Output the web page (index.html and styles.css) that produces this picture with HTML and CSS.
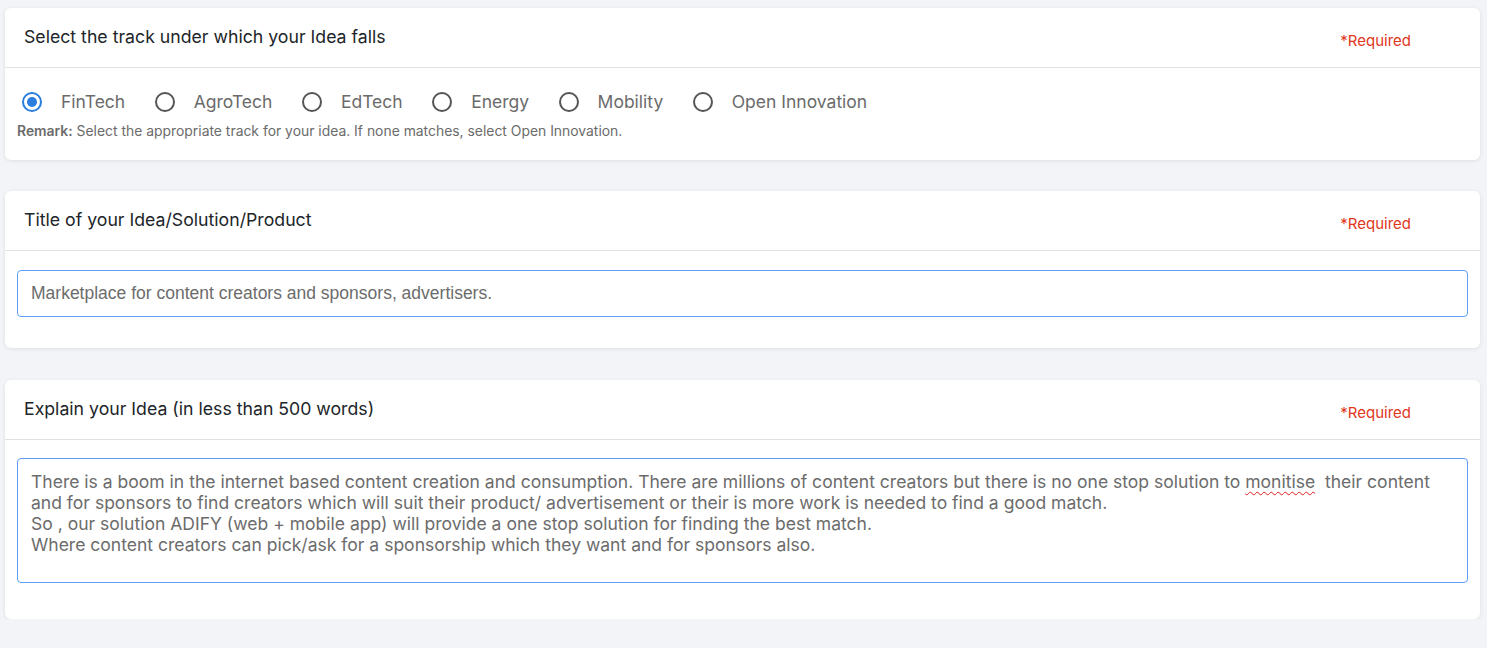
FILE: index.html
```html
<!DOCTYPE html>
<html lang="en">
<head>
<meta charset="utf-8">
<title>Idea submission</title>
<link rel="stylesheet" href="styles.css">
</head>
<body>
<main class="page">
  <section class="card">
    <header class="card-head">
      <h2 class="card-title">Select the track under which your Idea falls</h2>
      <span class="required">*Required</span>
    </header>
    <div class="card-body body-tracks">
      <div class="radios">
        <label class="radio"><span class="dot checked"></span><span class="radio-label">FinTech</span></label>
        <label class="radio"><span class="dot"></span><span class="radio-label">AgroTech</span></label>
        <label class="radio"><span class="dot"></span><span class="radio-label">EdTech</span></label>
        <label class="radio"><span class="dot"></span><span class="radio-label">Energy</span></label>
        <label class="radio"><span class="dot"></span><span class="radio-label">Mobility</span></label>
        <label class="radio"><span class="dot"></span><span class="radio-label">Open Innovation</span></label>
      </div>
      <p class="remark"><b>Remark:</b> Select the appropriate track for your idea. If none matches, select Open Innovation.</p>
    </div>
  </section>

  <section class="card">
    <header class="card-head">
      <h2 class="card-title">Title of your Idea/Solution/Product</h2>
      <span class="required">*Required</span>
    </header>
    <div class="card-body body-input">
      <div class="field field-input">Marketplace for content creators and sponsors, advertisers.</div>
    </div>
  </section>

  <section class="card card-last">
    <header class="card-head">
      <h2 class="card-title">Explain your Idea (in less than 500 words)</h2>
      <span class="required">*Required</span>
    </header>
    <div class="card-body body-area">
      <div class="field field-area">There is a boom in the internet based content creation and consumption. There are millions of content creators but there is no one stop solution to <span class="misspelt">monitise</span>  their content
and for sponsors to find creators which will suit their product/ advertisement or their is more work is needed to find a good match.
So , our solution ADIFY (web + mobile app) will provide a one stop solution for finding the best match.
Where content creators can pick/ask for a sponsorship which they want and for sponsors also.</div>
    </div>
  </section>
</main>
</body>
</html>
```

FILE: styles.css
```css
* { box-sizing: border-box; }

html, body {
  margin: 0;
  padding: 0;
  background: #f3f4f8;
}

body {
  font-family: Inter, "Noto Sans", sans-serif;
  color: #212529;
}

.page {
  display: flex;
  flex-direction: column;
  gap: 31px;
  padding: 8px 7px 0 5px;
}

.card {
  background: #fff;
  border-radius: 6px;
  box-shadow: 0 1px 4px rgba(0, 0, 0, 0.09);
}

.card-last {
  margin-top: 1px;
}

.card-head {
  display: flex;
  justify-content: space-between;
  align-items: flex-start;
  height: 60px;
  padding: 17px 69px 0 19px;
  border-bottom: 1px solid #dee2e6;
}

.card-title {
  margin: 0;
  font-size: 17.7px;
  font-weight: 400;
  line-height: 24px;
  color: #212529;
}

.required {
  margin-top: 6px;
  font-size: 15px;
  line-height: 20px;
  color: #e0361b;
}

.card-body {
  padding: 0 12px;
}

.body-tracks {
  padding: 22px 12px 20px 12px;
}

.radios {
  display: flex;
  align-items: center;
  gap: 29.5px;
  padding-left: 5px;
  height: 24px;
}

.radio {
  display: flex;
  align-items: center;
  gap: 19px;
}

.dot {
  width: 20px;
  height: 20px;
  border-radius: 50%;
  border: 2px solid #555;
  display: flex;
  align-items: center;
  justify-content: center;
}

.dot.checked {
  border-color: #2b7de0;
}

.dot.checked::after {
  content: "";
  width: 10px;
  height: 10px;
  border-radius: 50%;
  background: #2b7de0;
}

.radio-label {
  font-size: 17.5px;
  line-height: 24px;
  color: #6b6b6b;
}

.remark {
  margin: 8px 0 0 0;
  font-size: 13.9px;
  line-height: 18px;
  color: #6b6b6b;
}

.remark b {
  font-weight: 600;
}

.body-input {
  padding: 19px 12px 31px 12px;
}

.body-area {
  padding: 18px 12px 36px 12px;
}

.field {
  border: 1px solid #5d9ff7;
  border-radius: 4px;
  color: #6c6c6c;
}

.field-input {
  height: 47px;
  padding: 12px 13px;
  line-height: 21px;
  font-family: "Liberation Sans", Arial, sans-serif;
  font-size: 17.5px;
}

.field-area {
  height: 125px;
  padding: 12px 13px;
  line-height: 21px;
  font-family: Inter, "Noto Sans", sans-serif;
  font-size: 17.55px;
  white-space: pre;
}

.misspelt {
  text-decoration: underline wavy #e02020;
  text-decoration-thickness: 1px;
  text-underline-offset: 3px;
}
```
